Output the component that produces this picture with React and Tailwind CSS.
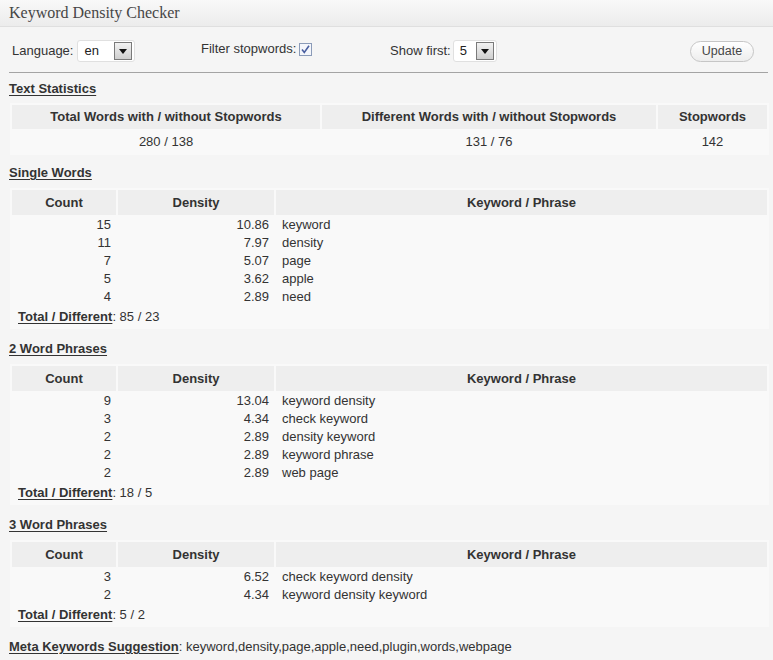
import React from "react";

const F = { fontFamily: '"Liberation Sans", Arial, sans-serif' };

function Arrow() {
  return (
    <div className="w-[18px] h-[18px] border border-[#7a7a7a] bg-gradient-to-b from-[#f2f2f2] to-[#cfcfcf] flex items-center justify-center">
      <svg width="8" height="5" viewBox="0 0 8 5">
        <polygon points="0,0 8,0 4,5" fill="#111" />
      </svg>
    </div>
  );
}

function Select({ value, width }) {
  return (
    <div
      className="h-[22px] bg-white border border-[#e0e0e0] rounded-[3px] flex items-center justify-between pl-[6px] pr-[2px]"
      style={{ width }}
    >
      <span className="text-[13px] text-[#222]">{value}</span>
      <Arrow />
    </div>
  );
}

function Label({ children, className = "" }) {
  return (
    <div className={"h-[18px] leading-[18px] text-[13px] font-bold underline text-[#333] underline-offset-[2px] " + className}>
      {children}
    </div>
  );
}

function WordTable({ rows, total }) {
  return (
    <table className="ml-[1px] w-[759px] table-fixed border-separate border-spacing-[2px] bg-[#f9f9f9] text-[13px] text-[#333]">
      <colgroup>
        <col className="w-[104px]" />
        <col className="w-[156px]" />
        <col />
      </colgroup>
      <thead>
        <tr>
          <th className="h-[25px] bg-[#eeeeee] font-bold text-center p-0">Count</th>
          <th className="h-[25px] bg-[#eeeeee] font-bold text-center p-0">Density</th>
          <th className="h-[25px] bg-[#eeeeee] font-bold text-center p-0">Keyword / Phrase</th>
        </tr>
      </thead>
      <tbody>
        {rows.map((r, i) => (
          <tr key={i}>
            <td className="h-[16px] leading-[16px] p-0 pr-[5px] text-right">{r[0]}</td>
            <td className="h-[16px] leading-[16px] p-0 pr-[5px] text-right">{r[1]}</td>
            <td className="h-[16px] leading-[16px] p-0 pl-[6px] text-left">{r[2]}</td>
          </tr>
        ))}
        <tr>
          <td colSpan={3} className="h-[20px] leading-[20px] p-0 pl-[6px]">
            <span className="font-bold underline underline-offset-[2px]">Total / Different</span>: {total}
          </td>
        </tr>
      </tbody>
    </table>
  );
}

export default function App() {
  return (
    <div className="w-[773px] h-[660px] bg-[#f5f5f5] overflow-hidden" style={F}>
      <div
        className="h-[27px] border-b border-[#dfdfdf] bg-gradient-to-b from-[#f9f9f9] to-[#ececec] pl-[9px] flex items-center text-[16px] text-[#464646]"
        style={{ fontFamily: '"Liberation Serif", Georgia, serif' }}
      >
        Keyword Density Checker
      </div>

      <div className="mt-[13px] h-[22px] flex items-center pl-[12px] text-[13px] text-[#333]">
        <div className="w-[189px] flex items-center gap-[4px]">
          <span>Language:</span>
          <Select value="en" width="58px" />
        </div>
        <div className="w-[189px] flex items-center gap-[3px] -mt-[4px]">
          <span>Filter stopwords:</span>
          <svg width="13" height="13" viewBox="0 0 13 13">
            <rect x="0.5" y="0.5" width="12" height="12" fill="#f4f6fb" stroke="#8b9bb8" />
            <path d="M3 6.5 L5.3 9.5 L10 2.8" fill="none" stroke="#4a5fa0" strokeWidth="1.6" />
          </svg>
        </div>
        <div className="flex items-center gap-[2px]">
          <span>Show first:</span>
          <Select value="5" width="44px" />
        </div>
        <div className="flex-1" />
        <button className="mr-[19px] w-[64px] h-[21px] rounded-full border border-[#c6c6c6] bg-gradient-to-b from-[#ffffff] to-[#ededed] text-[12.5px] text-[#464646] leading-none">
          Update
        </button>
      </div>

      <div className="mt-[10px] ml-[9px] mr-[5px] border-t border-[#a4a4a4]" />

      <div className="px-[9px]">
        <Label className="mt-[7px]">Text Statistics</Label>
        <table className="mt-[5px] ml-[1px] w-[759px] table-fixed border-separate border-spacing-[2px] bg-[#f9f9f9] text-[13px] text-[#333]">
          <colgroup>
            <col className="w-[308px]" />
            <col className="w-[334px]" />
            <col />
          </colgroup>
          <thead>
            <tr>
              <th className="h-[24px] bg-[#eeeeee] font-bold p-0">Total Words with / without Stopwords</th>
              <th className="h-[24px] bg-[#eeeeee] font-bold p-0">Different Words with / without Stopwords</th>
              <th className="h-[24px] bg-[#eeeeee] font-bold p-0">Stopwords</th>
            </tr>
          </thead>
          <tbody>
            <tr>
              <td className="h-[22px] p-0 text-center">280 / 138</td>
              <td className="h-[22px] p-0 text-center">131 / 76</td>
              <td className="h-[22px] p-0 text-center">142</td>
            </tr>
          </tbody>
        </table>

        <Label className="mt-[9px]">Single Words</Label>
        <div className="mt-[6px]">
          <WordTable
            rows={[
              ["15", "10.86", "keyword"],
              ["11", "7.97", "density"],
              ["7", "5.07", "page"],
              ["5", "3.62", "apple"],
              ["4", "2.89", "need"],
            ]}
            total="85 / 23"
          />
        </div>

        <Label className="mt-[11px]">2 Word Phrases</Label>
        <div className="mt-[6px]">
          <WordTable
            rows={[
              ["9", "13.04", "keyword density"],
              ["3", "4.34", "check keyword"],
              ["2", "2.89", "density keyword"],
              ["2", "2.89", "keyword phrase"],
              ["2", "2.89", "web page"],
            ]}
            total="18 / 5"
          />
        </div>

        <Label className="mt-[11px]">3 Word Phrases</Label>
        <div className="mt-[6px]">
          <WordTable
            rows={[
              ["3", "6.52", "check keyword density"],
              ["2", "4.34", "keyword density keyword"],
            ]}
            total="5 / 2"
          />
        </div>

        <div className="mt-[11px] h-[18px] leading-[18px] text-[13px] text-[#333]">
          <span className="font-bold underline underline-offset-[2px]">Meta Keywords Suggestion</span>: keyword,density,page,apple,need,plugin,words,webpage
        </div>
      </div>
    </div>
  );
}
